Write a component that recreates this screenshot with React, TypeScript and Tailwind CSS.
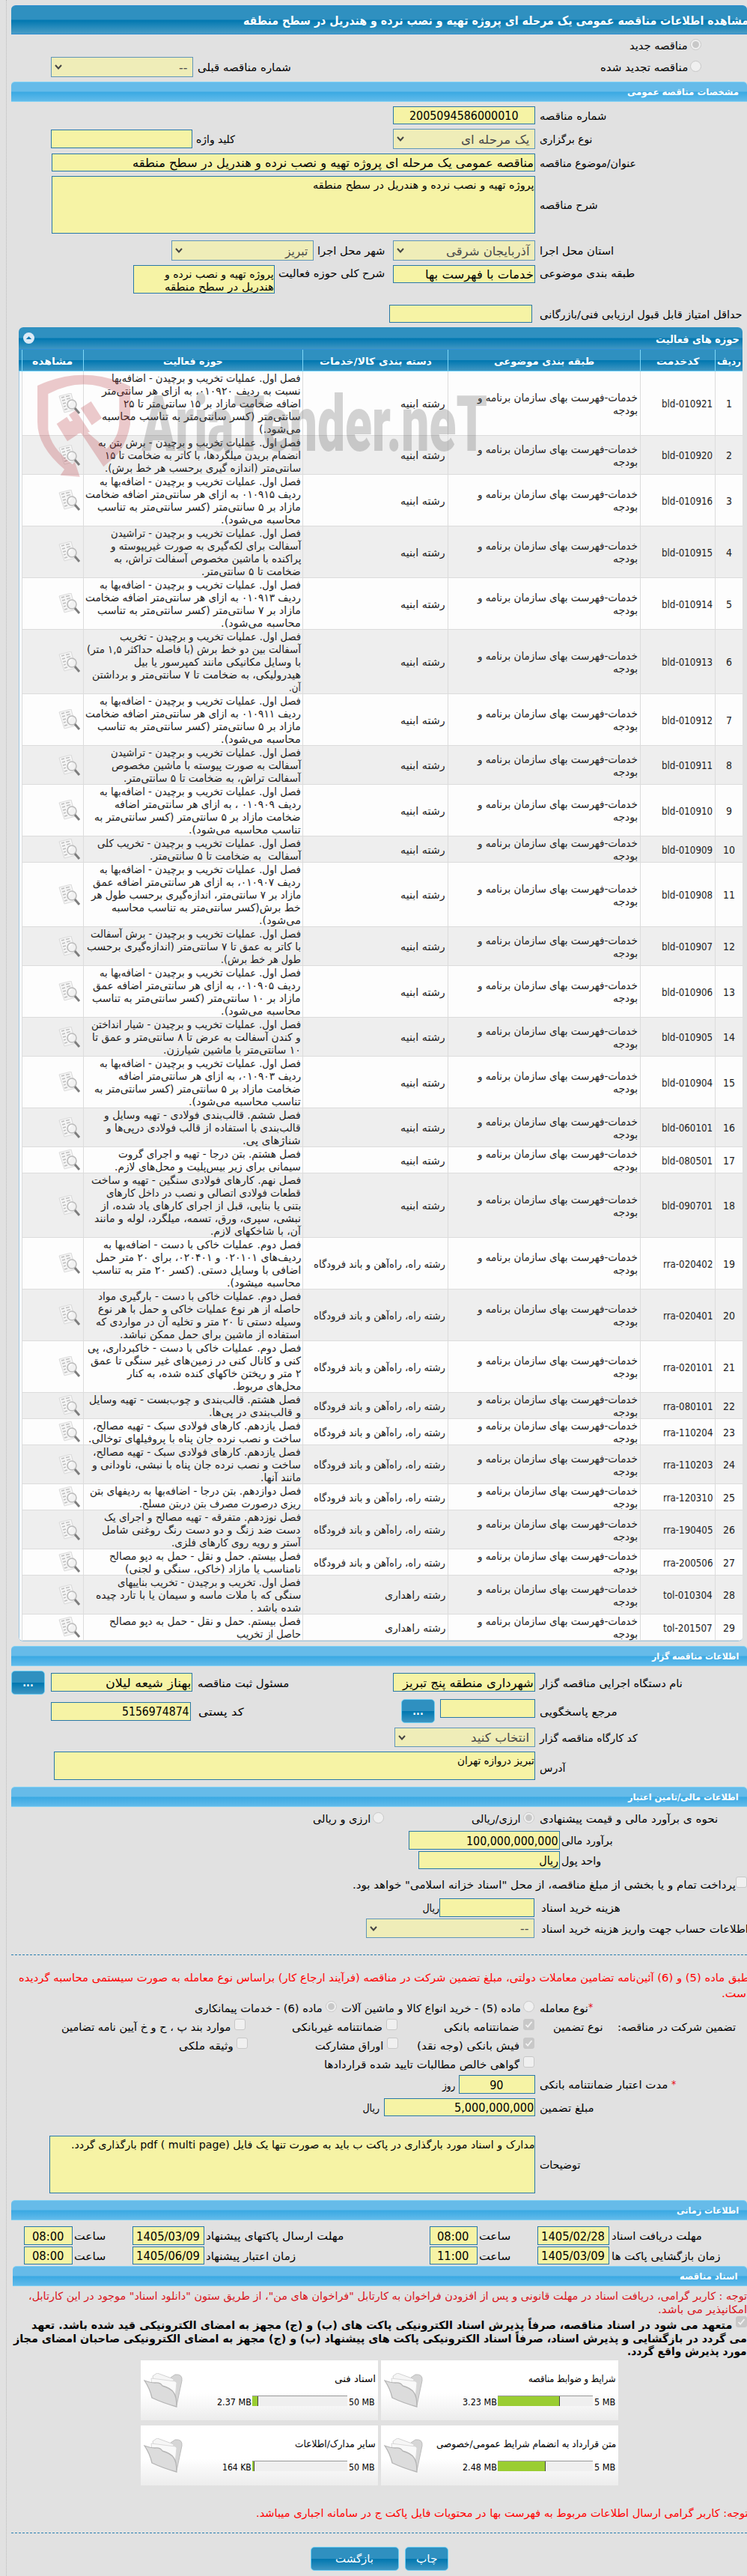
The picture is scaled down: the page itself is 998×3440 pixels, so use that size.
import { useLayoutEffect, useRef } from 'react';
import type { ReactNode } from 'react';
import clsx from 'clsx';

// Single line of text squeezed or stretched to the given width
function Fit({
  w,
  className,
  children,
}: {
  w: number;
  className?: string;
  children: ReactNode;
}) {
  const ref = useRef<HTMLSpanElement>(null);

  useLayoutEffect(() => {
    const el = ref.current;
    if (el && el.offsetWidth) {
      el.style.transform = `translateY(1px) scaleX(${w / el.offsetWidth})`;
    }
  }, [w, children]);

  return (
    <span
      className={clsx('flex shrink-0 justify-start', className)}
      style={{ width: w }}
    >
      <span ref={ref} className="shrink-0 origin-right whitespace-pre">
        {children}
      </span>
    </span>
  );
}

// Label column on the right, text ends next to the field
function Label({
  w,
  className,
  children,
}: {
  w: number;
  className?: string;
  children: ReactNode;
}) {
  return (
    <div className={clsx('flex w-[277px] shrink-0 justify-end', className)}>
      <Fit w={w}>{children}</Fit>
    </div>
  );
}

function Field({
  className,
  w,
  center,
  children,
}: {
  className: string;
  w?: number;
  center?: boolean;
  children?: ReactNode;
}) {
  return (
    <div
      className={clsx(
        'flex shrink-0 items-center border border-[#2878a8] bg-[#f6f3a5] pr-px text-[16px] leading-5',
        center && 'justify-center',
        className,
      )}
    >
      {w ? <Fit w={w}>{children}</Fit> : null}
    </div>
  );
}

function Area({ className, children }: { className: string; children?: ReactNode }) {
  return (
    <div
      className={clsx(
        'shrink-0 border border-[#2878a8] bg-[#f6f3a5] pt-[2px] leading-[17px]',
        className,
      )}
    >
      {children}
    </div>
  );
}

function Select({
  className,
  w,
  children,
}: {
  className: string;
  w: number;
  children: ReactNode;
}) {
  return (
    <div
      className={clsx(
        'flex shrink-0 items-center justify-between border border-[#6096b8] bg-[#efedb8] pr-[7px] pl-[4px] text-[16px] leading-5 text-[#4a4a4a]',
        className,
      )}
    >
      <Fit w={w}>{children}</Fit>
      <svg width="10" height="7" viewBox="0 0 10 7" fill="none">
        <path d="M1 1l4 4.4L9 1" stroke="#444" strokeWidth="2" />
      </svg>
    </div>
  );
}

function Radio({ checked, className }: { checked?: boolean; className?: string }) {
  return (
    <span
      className={clsx(
        'flex size-[15px] shrink-0 items-center justify-center rounded-full border border-[#c8c8c8] bg-[#f0f0f0]',
        className,
      )}
    >
      {checked && <span className="size-[9px] rounded-full bg-[#c8c8c8]" />}
    </span>
  );
}

function Check({ checked, className }: { checked?: boolean; className?: string }) {
  return (
    <span
      className={clsx(
        'flex size-[15px] shrink-0 items-center justify-center rounded-[3px] border border-[#c8c8c8]',
        checked ? 'bg-[#c8c8c8]' : 'bg-[#f0f0f0]',
        className,
      )}
    >
      {checked && (
        <svg width="11" height="11" viewBox="0 0 11 11" fill="none">
          <path d="M1.5 6l2.6 2.7L9.5 2" stroke="#f4f4f4" strokeWidth="1.8" />
        </svg>
      )}
    </span>
  );
}

function Bar({ w, className, children }: { w: number; className?: string; children: ReactNode }) {
  return (
    <div
      className={clsx(
        'ml-[15px] flex h-[27px] items-center rounded-t-[5px] border-y border-[#7fd0f4] bg-[linear-gradient(to_bottom,#66bbe9_0%,#66bbe9_48%,#3aa9e3_52%,#62bbea_100%)] pr-[11px] text-[12px] font-bold text-white',
        className,
      )}
    >
      <Fit w={w}>{children}</Fit>
    </div>
  );
}

function Button({ className, children }: { className: string; children: ReactNode }) {
  return (
    <button
      className={clsx(
        'flex h-8 shrink-0 items-center justify-center rounded-[5px] border border-[#6bcdf3] bg-[linear-gradient(to_bottom,#2f90c0_0%,#2f90c0_49%,#0077b0_51%,#3f96c2_100%)] text-white',
        className,
      )}
    >
      {children}
    </button>
  );
}

function Star({ className }: { className?: string }) {
  return <span className={clsx('shrink-0 text-[14px] text-red-600', className)}>*</span>;
}

// Sheet of paper with a magnifier
function ViewIcon() {
  return (
    <svg width="30" height="28" viewBox="0 0 30 28" fill="none">
      <path d="M1 4L17 0l6 22-15 4z" fill="#f5f5f5" stroke="#d3d3d3" strokeWidth=".8" />
      <path
        d="M4 6l4-1M10 4.500l5-1.200M5 10l4-1M11 8l5-1.300M6 14l4-1M7 18l3-.8M8 22l4-1"
        stroke="#bdbdbd"
        strokeWidth="1.300"
      />
      <circle cx="18" cy="15" r="6" fill="#f1f1f1" fillOpacity=".85" stroke="#bcbcbc" strokeWidth="1.600" />
      <path d="M14.500 15a4 4 0 013-4" stroke="#fff" strokeWidth="1.400" />
      <path d="M22 20l6 7" stroke="#7d7d7d" strokeWidth="3" />
    </svg>
  );
}

function FolderIcon() {
  return (
    <svg width="53" height="47" viewBox="0 0 53 47" fill="none">
      <path d="M36 6l6-4q10-1 9 8l-7 33-8-20z" fill="#d6d6d6" stroke="#bcbcbc" />
      <path d="M12 4l6-4 22 8-3 28-22-13z" fill="#f6f6f6" stroke="#d2d2d2" />
      <path d="M10 7l32 4 2 2-2 20-30-8z" fill="#f9f9f9" stroke="#dadada" />
      <path
        d="M1 10q8 3 14 3 7-1 10 4 11 3 15 9 4 5 4 19-18-5-33-12Q8 20 1 10z"
        fill="#dcdcdc"
        stroke="#b4b4b4"
        strokeWidth="1.300"
      />
    </svg>
  );
}

const BUILDING = { text: 'رشته ابنیه', w: 60 };
const ROAD = { text: 'رشته راه، راه\u200cآهن و باند فرودگاه', w: 176 };
const UPKEEP = { text: 'رشته راهداری', w: 81 };

type Row = {
  code: string;
  group: { text: string; w: number };
  lines: [string, number][];
};

const rows: Row[] = [
  {
    code: 'bld-010921',
    group: BUILDING,
    lines: [
      ['فصل اول. عملیات تخریب و برچیدن - اضافه\u200cبها', 253],
      ['نسبت به ردیف ۰۱۰۹۲۰، به ازای هر سانتی\u200cمتر', 266],
      ['اضافه ضخامت مازاد بر ۱۵ سانتی\u200cمتر تا ۲۵', 237],
      ['سانتی\u200cمتر (کسر سانتی\u200cمتر به تناسب محاسبه', 266],
      ['می\u200cشود.)', 56],
    ],
  },
  {
    code: 'bld-010920',
    group: BUILDING,
    lines: [
      ['فصل اول. عملیات تخریب و برچیدن - برش بتن به', 271],
      ['انضمام بریدن میلگردها، با کاتر به ضخامت تا ۱۵', 262],
      ['سانتی\u200cمتر (اندازه گیری برحسب هر خط برش).', 262],
    ],
  },
  {
    code: 'bld-010916',
    group: BUILDING,
    lines: [
      ['فصل اول. عملیات تخریب و برچیدن - اضافه\u200cبها به', 269],
      ['ردیف ۰۱۰۹۱۵ به ازای هر سانتی\u200cمتر اضافه ضخامت', 288],
      ['مازاد بر ۵ سانتی\u200cمتر (کسر سانتی\u200cمتر به تناسب', 272],
      ['محاسبه می\u200cشود).', 107],
    ],
  },
  {
    code: 'bld-010915',
    group: BUILDING,
    lines: [
      ['فصل اول. عملیات تخریب و برچیدن - تراشیدن', 254],
      ['آسفالت برای لکه\u200cگیری به صورت غیرپیوسته و', 254],
      ['پراکنده با ماشین مخصوص آسفالت تراش، به', 251],
      ['ضخامت تا ۵ سانتی\u200cمتر.', 133],
    ],
  },
  {
    code: 'bld-010914',
    group: BUILDING,
    lines: [
      ['فصل اول. عملیات تخریب و برچیدن - اضافه\u200cبها به', 269],
      ['ردیف ۰۱۰۹۱۳ به ازای هر سانتی\u200cمتر اضافه ضخامت', 288],
      ['مازاد بر ۷ سانتی\u200cمتر (کسر سانتی\u200cمتر به تناسب', 272],
      ['محاسبه می\u200cشود).', 107],
    ],
  },
  {
    code: 'bld-010913',
    group: BUILDING,
    lines: [
      ['فصل اول. عملیات تخریب و برچیدن - تخریب', 242],
      ['آسفالت بین دو خط برش (با فاصله حداکثر ۱,۵ متر)', 286],
      ['با وسایل مکانیکی مانند کمپرسور یا بیل', 223],
      ['هیدرولیکی، به ضخامت تا ۷ سانتی\u200cمتر و برداشتن', 279],
      ['آن.', 16],
    ],
  },
  {
    code: 'bld-010912',
    group: BUILDING,
    lines: [
      ['فصل اول. عملیات تخریب و برچیدن - اضافه\u200cبها به', 269],
      ['ردیف ۰۱۰۹۱۱ به ازای هر سانتی\u200cمتر اضافه ضخامت', 288],
      ['مازاد بر ۵ سانتی\u200cمتر (کسر سانتی\u200cمتر به تناسب', 272],
      ['محاسبه می\u200cشود).', 107],
    ],
  },
  {
    code: 'bld-010911',
    group: BUILDING,
    lines: [
      ['فصل اول. عملیات تخریب و برچیدن - تراشیدن', 254],
      ['آسفالت به صورت پیوسته با ماشین مخصوص', 253],
      ['آسفالت تراش، به ضخامت تا ۵ سانتی\u200cمتر.', 237],
    ],
  },
  {
    code: 'bld-010910',
    group: BUILDING,
    lines: [
      ['فصل اول. عملیات تخریب و برچیدن - اضافه\u200cبها به', 269],
      ['ردیف ۰۱۰۹۰۹ ، به ازای هر سانتی\u200cمتر اضافه', 249],
      ['ضخامت مازاد بر ۵ سانتی\u200cمتر (کسر سانتی\u200cمتر به', 276],
      ['تناسب محاسبه می\u200cشود).', 150],
    ],
  },
  {
    code: 'bld-010909',
    group: BUILDING,
    lines: [
      ['فصل اول. عملیات تخریب و برچیدن - تخریب کلی', 272],
      ['آسفالت  به ضخامت تا ۵ سانتی\u200cمتر.', 202],
    ],
  },
  {
    code: 'bld-010908',
    group: BUILDING,
    lines: [
      ['فصل اول. عملیات تخریب و برچیدن - اضافه\u200cبها به', 269],
      ['ردیف ۰۱۰۹۰۷، به ازای هر سانتی\u200cمتر اضافه عمق', 278],
      ['مازاد بر ۷ سانتی\u200cمتر، اندازه\u200cگیری برحسب طول هر', 280],
      ['خط برش(کسر سانتی\u200cمتر به تناسب محاسبه', 253],
      ['می\u200cشود).', 56],
    ],
  },
  {
    code: 'bld-010907',
    group: BUILDING,
    lines: [
      ['فصل اول. عملیات تخریب و برچیدن - برش آسفالت', 281],
      ['با کاتر به عمق تا ۷ سانتی\u200cمتر (اندازه\u200cگیری برحسب', 286],
      ['طول هر خط برش).', 107],
    ],
  },
  {
    code: 'bld-010906',
    group: BUILDING,
    lines: [
      ['فصل اول. عملیات تخریب و برچیدن - اضافه\u200cبها به', 269],
      ['ردیف ۰۱۰۹۰۵، به ازای هر سانتی\u200cمتر اضافه عمق', 278],
      ['مازاد بر ۱۰ سانتی\u200cمتر (کسر سانتی\u200cمتر به تناسب', 279],
      ['محاسبه می\u200cشود).', 107],
    ],
  },
  {
    code: 'bld-010905',
    group: BUILDING,
    lines: [
      ['فصل اول. عملیات تخریب و برچیدن - شیار انداختن', 280],
      ['و کندن آسفالت به عرض تا ۸ سانتی\u200cمتر و عمق تا', 279],
      ['۱۰ سانتی\u200cمتر با ماشین شیارزن.', 184],
    ],
  },
  {
    code: 'bld-010904',
    group: BUILDING,
    lines: [
      ['فصل اول. عملیات تخریب و برچیدن - اضافه\u200cبها به', 269],
      ['ردیف ۰۱۰۹۰۳، به ازای هر سانتی\u200cمتر اضافه', 244],
      ['ضخامت مازاد بر ۵ سانتی\u200cمتر (کسر سانتی\u200cمتر به', 276],
      ['تناسب محاسبه می\u200cشود).', 150],
    ],
  },
  {
    code: 'bld-060101',
    group: BUILDING,
    lines: [
      ['فصل ششم. قالب\u200cبندی فولادی - تهیه وسایل و', 263],
      ['قالب\u200cبندی با استفاده از قالب فولادی درپی\u200cها و', 260],
      ['شناژهای پی.', 78],
    ],
  },
  {
    code: 'bld-080501',
    group: BUILDING,
    lines: [
      ['فصل هشتم. بتن درجا - تهیه و اجرای گروت', 244],
      ['سیمانی برای زیر بیس\u200cپلیت و محل\u200cهای لازم.', 249],
    ],
  },
  {
    code: 'bld-090701',
    group: BUILDING,
    lines: [
      ['فصل نهم. کارهای فولادی سنگین - تهیه و ساخت', 280],
      ['قطعات فولادی اتصالی و نصب در داخل کارهای', 260],
      ['بتنی یا بنایی، قبل از اجرای کارهای یاد شده، از', 267],
      ['نبشی، سپری، ورق، تسمه، میلگرد، لوله و مانند', 276],
      ['آن، با شاخکهای لازم.', 121],
    ],
  },
  {
    code: 'rra-020402',
    group: ROAD,
    lines: [
      ['فصل دوم. عملیات خاکی با دست - اضافه\u200cبها به', 264],
      ['ردیف\u200cهای ۰۲۰۱۰۱ و ۰۲۰۴۰۱، برای ۲۰ متر حمل', 274],
      ['اضافی با وسایل دستی. (کسر ۲۰ متر به تناسب', 279],
      ['محاسبه میشود).', 99],
    ],
  },
  {
    code: 'rra-020401',
    group: ROAD,
    lines: [
      ['فصل دوم. عملیات خاکی با دست - بارگیری مواد', 271],
      ['حاصله از هر نوع عملیات خاکی و حمل با هر نوع', 271],
      ['وسیله دستی تا ۲۰ متر و تخلیه آن در مواردی که', 274],
      ['استفاده از ماشین برای حمل ممکن نباشد.', 242],
    ],
  },
  {
    code: 'rra-020101',
    group: ROAD,
    lines: [
      ['فصل دوم. عملیات خاکی با دست - خاکبرداری، پی', 285],
      ['کنی و کانال کنی در زمین\u200cهای غیر سنگی تا عمق', 281],
      ['۲ متر و ریختن خاکهای کنده شده، به کنار', 232],
      ['محل\u200cهای مربوط.', 91],
    ],
  },
  {
    code: 'rra-080101',
    group: ROAD,
    lines: [
      ['فصل هشتم. قالب\u200cبندی و چوب\u200cبست - تهیه وسایل', 283],
      ['و قالب\u200cبندی در پی\u200cها.', 123],
    ],
  },
  {
    code: 'rra-110204',
    group: ROAD,
    lines: [
      ['فصل یازدهم. کارهای فولادی سبک - تهیه مصالح،', 278],
      ['ساخت و نصب نرده جان پناه با پروفیلهای توخالی.', 284],
    ],
  },
  {
    code: 'rra-110203',
    group: ROAD,
    lines: [
      ['فصل یازدهم. کارهای فولادی سبک - تهیه مصالح،', 278],
      ['ساخت و نصب نرده جان پناه با نبشی، ناودانی و', 279],
      ['مانند آنها.', 54],
    ],
  },
  {
    code: 'rra-120310',
    group: ROAD,
    lines: [
      ['فصل دوازدهم. بتن درجا - اضافه\u200cبها به ردیفهای بتن', 282],
      ['ریزی درصورت مصرف بتن دربتن مسلح.', 216],
    ],
  },
  {
    code: 'rra-190405',
    group: ROAD,
    lines: [
      ['فصل نوزدهم. متفرقه - تهیه مصالح و اجرای یک', 263],
      ['دست ضد زنگ و دو دست رنگ روغنی شامل', 266],
      ['آستر و رویه روی کارهای فلزی.', 173],
    ],
  },
  {
    code: 'rra-200506',
    group: ROAD,
    lines: [
      ['فصل بیستم. حمل و نقل - حمل به دپو مصالح', 256],
      ['نامناسب یا مازاد (خاکی، سنگی و لجنی)', 235],
    ],
  },
  {
    code: 'tol-010304',
    group: UPKEEP,
    lines: [
      ['فصل اول. تخریب و برچیدن - تخریب بناییهای', 245],
      ['سنگی که با ملات ماسه و سیمان یا با تارد چیده', 274],
      ['شده باشد .', 68],
    ],
  },
  {
    code: 'tol-201507',
    group: UPKEEP,
    lines: [
      ['فصل بیستم. حمل و نقل - حمل به دپو مصالح', 256],
      ['حاصل از تخریب', 86],
    ],
  },
];

const GRID = 'grid grid-cols-[37px_100px_257px_194px_293px_82px_4px]';
const HEAD_CELL = 'flex items-center justify-center border-l border-[#7fd8f8]';
const CELL = 'flex items-center border-l border-[#dcdcdc] pr-[3px]';

const headers: [string, number][] = [
  ['ردیف', 32],
  ['کدخدمت', 57],
  ['طبقه بندی موضوعی', 134],
  ['دسته بندی کالا/خدمات', 150],
  ['حوزه فعالیت', 80],
  ['مشاهده', 54],
];

function Watermark() {
  return (
    <svg
      className="pointer-events-none absolute top-[496px] left-[45px] opacity-25"
      width="610"
      height="145"
      viewBox="135 198 1830 435"
      direction="ltr"
    >
      <g fill="#b8343c">
        <path d="M150 255Q335 168 522 257V410Q512 475 473 528L415 580 325 445 292 452 262 405 300 392 318 415 428 508Q478 460 478 400V288Q335 212 193 288V430Q200 500 290 570L300 560 320 620 242 614 258 590Q150 500 150 400Z" />
        <path d="M323 345L365 318 408 385 368 413ZM227 408L268 380 312 450 270 478ZM276 372L303 353 360 440 328 449Z" />
      </g>
      <text
        x="568"
        y="515"
        textLength="1385"
        lengthAdjust="spacingAndGlyphs"
        className="font-['Roboto','DejaVu_Sans',sans-serif] text-[310px] font-black"
        fill="#555"
      >
        AriaTender.neT
      </text>
    </svg>
  );
}

function ActivityTable() {
  return (
    <div className="mt-[6px] mr-[6px] ml-[25px] overflow-hidden rounded-[6px] border-b border-[#9cc6e0] bg-white">
      <div className="flex h-[29px] items-center justify-between bg-[linear-gradient(to_bottom,#2f90c0_0%,#2f90c0_49%,#0077b0_51%,#3f96c2_100%)] pr-1 pl-[6px] text-white">
        <Fit w={112} className="pt-[2px] font-bold">
          حوزه های فعالیت
        </Fit>
        <svg width="15" height="15" viewBox="0 0 15 15">
          <circle cx="7.500" cy="7.500" r="7.500" fill="#dceaf6" />
          <path d="M3.800 9l3.700-3.800L11.200 9z" fill="#0b78b4" />
        </svg>
      </div>
      <div
        className={clsx(
          GRID,
          'h-[30px] border-t border-t-[#2d8fd8] border-b border-b-[#6dcff6] bg-[linear-gradient(to_bottom,#2f90c0_0%,#2f90c0_49%,#0077b0_51%,#3f96c2_100%)] text-[13px] font-bold text-white',
        )}
      >
        {headers.map(([text, w]) => (
          <div key={text} className={HEAD_CELL}>
            <Fit w={w}>{text}</Fit>
          </div>
        ))}
      </div>
      {rows.map((row, i) => (
        <div
          key={row.code}
          className={clsx(GRID, 'border-l border-l-[#9cc6e0] text-[#222]')}
        >
          <div
            className={clsx(
              'col-span-6 grid grid-cols-subgrid border-b border-[#dcdcdc]',
              i % 2 ? 'bg-[#eee]' : 'bg-[#fdfdfd]',
            )}
          >
            <div className="flex items-center justify-center border-l border-[#dcdcdc]">
              <Fit w={i < 9 ? 8 : 16}>{i + 1}</Fit>
            </div>
            <div className={CELL}>
              <Fit w={row.group === BUILDING ? 68 : 66}>{row.code}</Fit>
            </div>
            <div className="flex flex-col justify-center border-l border-[#dcdcdc] pr-[3px] leading-[17px]">
              <Fit w={214}>خدمات-فهرست بهای سازمان برنامه و</Fit>
              <Fit w={33}>بودجه</Fit>
            </div>
            <div className={CELL}>
              <Fit w={row.group.w}>{row.group.text}</Fit>
            </div>
            <div className="border-l border-[#dcdcdc] pr-[2px] leading-[17px]">
              {row.lines.map(([text, w]) => (
                <Fit key={text} w={w}>
                  {text}
                </Fit>
              ))}
            </div>
            <div className="flex items-center border-l border-[#dcdcdc] pr-[3px]">
              <ViewIcon />
            </div>
          </div>
        </div>
      ))}
    </div>
  );
}

type Doc = {
  title: string;
  w: number;
  used: string;
  usedW: number;
  max: string;
  maxW: number;
  fill: number;
};

const docs: Doc[] = [
  { title: 'شرایط و ضوابط مناقصه', w: 117, used: '3.23 MB', usedW: 46, max: '5 MB', maxW: 28, fill: 83 },
  { title: 'اسناد فنی', w: 55, used: '2.37 MB', usedW: 46, max: '50 MB', maxW: 35, fill: 8 },
  { title: 'متن قرارداد به انضمام شرایط عمومی/خصوصی', w: 240, used: '2.48 MB', usedW: 46, max: '5 MB', maxW: 28, fill: 64 },
  { title: 'سایر مدارک/اطلاعات', w: 108, used: '164 KB', usedW: 39, max: '50 MB', maxW: 35, fill: 3 },
];

function DocCard({ doc }: { doc: Doc }) {
  return (
    <div className="flex h-20 w-[317px] justify-between bg-[linear-gradient(to_bottom,#fff_0%,#fff_55%,#ececec_100%)] pr-[3px] pl-1 text-[13px]">
      <div className="pt-[15px]">
        <Fit w={doc.w}>{doc.title}</Fit>
        <div className="mt-[14px] flex items-center pr-px">
          <Fit w={doc.maxW}>
            <bdi>{doc.max}</bdi>
          </Fit>
          <div
            dir="ltr"
            className="mr-[2px] h-[14px] w-[127px] border-t border-[#999] bg-[#efefef]"
          >
            <div
              className="h-full border-r border-[#444] bg-[#9acd32]"
              style={{ width: doc.fill }}
            />
          </div>
          <Fit w={doc.usedW} className="mr-px">
            <bdi>{doc.used}</bdi>
          </Fit>
        </div>
      </div>
      <div className="pt-[17px]">
        <FolderIcon />
      </div>
    </div>
  );
}

export default function App() {
  return (
    <div
      dir="rtl"
      className="relative h-[3440px] w-[998px] overflow-hidden bg-[#e1e1e1] pt-[7px] font-['DejaVu_Sans_Condensed','DejaVu_Sans',sans-serif] text-[14px] leading-[17px] text-black"
    >
      <div className="absolute top-0 left-[8px] h-full border-l border-dotted border-[#bbb]" />

      <div className="ml-[15px] flex h-[39px] items-center rounded-t-[6px] border-y border-[#2d8bd0] bg-[linear-gradient(to_bottom,#2f90c0_0%,#2f90c0_49%,#0077b0_51%,#4a9dc6_100%)] text-[16px] font-bold text-white">
        <Fit w={675} className="-mr-[2px]">
          مشاهده اطلاعات مناقصه عمومی یک مرحله ای پروژه تهیه و نصب نرده و هندریل در سطح منطقه
        </Fit>
      </div>

      <div className="mt-1 flex h-[21px] items-center pr-[61px]">
        <Radio checked className="-mt-[2px]" />
        <Fit w={78} className="mr-[3px]">
          مناقصه جدید
        </Fit>
      </div>
      <div className="mt-[5px] flex h-[27px] items-center pr-[61px]">
        <Radio className="-mt-[2px]" />
        <Fit w={117} className="mr-[3px]">
          مناقصه تجدید شده
        </Fit>
        <Fit w={125} className="mr-[413px]">
          شماره مناقصه قبلی
        </Fit>
        <Select w={11} className="mr-[6px] h-[27px] w-[190px]">
          --
        </Select>
      </div>

      <Bar w={149} className="mt-[6px]">
        مشخصات مناقصه عمومی
      </Bar>
      <div className="mt-[6px] flex h-6 items-center">
        <Label w={89}>شماره مناقصه</Label>
        <Field w={146} center className="mr-[6px] h-6 w-[190px]">
          2005094586000010
        </Field>
      </div>
      <div className="mt-[6px] flex h-[27px] items-center">
        <Label w={70}>نوع برگزاری</Label>
        <Select w={91} className="mr-[6px] h-[27px] w-[190px]">
          یک مرحله ای
        </Select>
        <Fit w={52} className="mr-[211px]">
          کلید واژه
        </Fit>
        <Field className="mr-[5px] h-[25px] w-[189px]" />
      </div>
      <div className="mt-[6px] flex h-6 items-center">
        <Label w={129}>عنوان/موضوع مناقصه</Label>
        <Field w={536} className="mr-[6px] h-6 w-[646px]">
          مناقصه عمومی یک مرحله ای پروژه تهیه و نصب نرده و هندریل در سطح منطقه
        </Field>
      </div>
      <div className="mt-[6px] flex h-[77px] items-center">
        <Label w={78}>شرح مناقصه</Label>
        <Area className="mr-[6px] h-[77px] w-[646px]">
          <Fit w={296}>پروژه تهیه و نصب نرده و هندریل در سطح منطقه</Fit>
        </Area>
      </div>
      <div className="mt-[9px] flex h-[27px] items-center">
        <Label w={99}>استان محل اجرا</Label>
        <Select w={111} className="mr-[6px] h-[27px] w-[190px]">
          آذربایجان شرقی
        </Select>
        <Fit w={90} className="mr-[11px]">
          شهر محل اجرا
        </Fit>
        <Select w={30} className="mr-[5px] h-[27px] w-[190px]">
          تبریز
        </Select>
      </div>
      <div className="mt-[6px] flex h-[38px] items-start">
        <Label w={127} className="mt-[2px]">
          طبقه بندی موضوعی
        </Label>
        <Field w={145} className="mr-[6px] h-6 w-[190px]">
          خدمات با فهرست بها
        </Field>
        <Fit w={142} className="mt-[2px] mr-[11px]">
          شرح کلی حوزه فعالیت
        </Fit>
        <Area className="mr-[5px] h-[38px] w-[189px]">
          <Fit w={146}>پروژه تهیه و نصب نرده و</Fit>
          <Fit w={146}>هندریل در سطح منطقه</Fit>
        </Area>
      </div>
      <div className="mt-[15px] flex h-6 items-center">
        <Label w={271}>حداقل امتیاز قابل قبول ارزیابی فنی/بازرگانی</Label>
        <Field className="mr-[10px] h-6 w-[191px]" />
      </div>

      <ActivityTable />

      <Bar w={116} className="mt-[6px]">
        اطلاعات مناقصه گزار
      </Bar>
      <div className="mt-[6px] flex h-8 items-center">
        <Label w={191}>نام دستگاه اجرایی مناقصه گزار</Label>
        <Field w={175} className="mr-[6px] mb-px h-[25px] w-[190px]">
          شهرداری منطقه پنج تبریز
        </Field>
        <Fit w={122} className="mr-[139px]">
          مسئول ثبت مناقصه
        </Fit>
        <Field w={114} className="mr-[7px] mb-px h-[25px] w-[189px]">
          بهناز شیعه لیلان
        </Field>
        <Button className="mr-[8px] w-[45px] font-bold">...</Button>
      </div>
      <div className="mt-[6px] flex h-8 items-center">
        <Label w={104}>مرجع پاسخگویی</Label>
        <Field className="mr-[6px] mb-[7px] h-[25px] w-[127px]" />
        <Button className="mr-[7px] w-[45px] font-bold">...</Button>
        <Fit w={61} className="mr-[210px]">
          کد پستی
        </Fit>
        <Field w={90} className="mr-[10px] h-[25px] w-[187px]">
          5156974874
        </Field>
      </div>
      <div className="mt-[6px] flex h-[26px] items-center">
        <Label w={131}>کد کارگاه مناقصه گزار</Label>
        <Select w={78} className="mr-[6px] h-[26px] w-[188px]">
          انتخاب کنید
        </Select>
      </div>
      <div className="mt-[6px] flex h-[38px] items-center">
        <Label w={35} className="mt-[4px]">
          آدرس
        </Label>
        <Area className="mr-[6px] h-[38px] w-[643px]">
          <Fit w={103}>تبریز دروازه تهران</Fit>
        </Area>
      </div>

      <Bar w={148} className="mt-[9px]">
        اطلاعات مالی/تامین اعتبار
      </Bar>
      <div className="mt-[7px] flex h-6 items-start">
        <Label w={238}>نحوه ی برآورد مالی و قیمت پیشنهادی</Label>
        <Radio checked className="mr-[7px]" />
        <Fit w={66} className="mr-[3px]">
          ارزی/ریالی
        </Fit>
        <Radio className="mr-[117px]" />
        <Fit w={77} className="mr-[3px]">
          ارزی و ریالی
        </Fit>
      </div>
      <div className="mt-px flex h-[25px] items-center pr-[179px]">
        <Fit w={69}>برآورد مالی</Fit>
        <Field w={123} className="mr-[2px] h-[25px] w-[202px]">
          100,000,000,000
        </Field>
      </div>
      <div className="mt-[2px] flex h-6 items-center pr-[195px]">
        <Fit w={53}>واحد پول</Fit>
        <Field w={26} className="mr-[2px] h-6 w-[189px]">
          ریال
        </Field>
      </div>
      <div className="mt-[10px] flex h-4 items-start">
        <Check />
        <Fit w={512} className="mt-[2px]">
          پرداخت تمام و یا بخشی از مبلغ مناقصه، از محل "اسناد خزانه اسلامی" خواهد بود.
        </Fit>
      </div>
      <div className="mt-[13px] flex h-[25px] items-center pr-[169px]">
        <Fit w={106}>هزینه خرید اسناد</Fit>
        <Field className="mr-[9px] h-[25px] w-[127px]" />
        <Fit w={23}>ریال</Fit>
      </div>
      <div className="mt-[2px] flex h-[26px] items-center">
        <Fit w={277} className="-mr-[2px]">
          اطلاعات حساب جهت واریز هزینه خرید اسناد
        </Fit>
        <Select w={11} className="mr-[9px] h-[26px] w-[225px]">
          --
        </Select>
      </div>

      <div className="mt-[22px] ml-[15px] border-t border-dashed border-[#2a7fb0]" />

      <div className="mt-[19px] leading-[21px] text-[#f00]">
        <Fit w={977} className="-mr-[3px]">
          طبق ماده (5) و (6) آئین‌نامه تضامین معاملات دولتی، مبلغ تضمین شرکت در مناقصه (فرآیند ارجاع کار) براساس نوع معامله به صورت سیستمی محاسبه گردیده
        </Fit>
        <Fit w={37} className="-mr-[3px]">
          است.
        </Fit>
      </div>
      <div className="flex h-[18px] items-start">
        <div className="flex w-[277px] justify-end">
          <Star />
          <Fit w={65} className="mt-px">
            نوع معامله
          </Fit>
        </div>
        <Radio className="mr-[7px]" />
        <Fit w={240} className="mt-px mr-[3px]">
          ماده (5) - خرید انواع کالا و ماشین آلات
        </Fit>
        <Radio checked className="mr-[6px]" />
        <Fit w={171} className="mt-px mr-[4px]">
          ماده (6) - خدمات پیمانکاری
        </Fit>
      </div>
      <div className="mt-[6px] flex h-4 items-start pr-[15px]">
        <Fit w={158} className="mt-[2px]">
          تضمین شرکت در مناقصه:
        </Fit>
        <Fit w={67} className="mt-[2px] mr-[19px]">
          نوع تضمین
        </Fit>
        <Check checked className="mr-[25px]" />
        <Fit w={101} className="mt-[2px] mr-[5px]">
          ضمانتنامه بانکی
        </Fit>
        <Check className="mr-[62px]" />
        <Fit w={121} className="mt-[2px] mr-[5px]">
          ضمانتنامه غیربانکی
        </Fit>
        <Check className="mr-[62px]" />
        <Fit w={226} className="mt-[2px] mr-[5px]">
          موارد بند پ ، ح و خ آیین نامه تضامین
        </Fit>
      </div>
      <div className="mt-[9px] flex h-4 items-start pr-[284px]">
        <Check checked />
        <Fit w={137} className="mt-[2px] mr-[5px]">
          فیش بانکی (وجه نقد)
        </Fit>
        <Check className="mr-[25px]" />
        <Fit w={91} className="mt-[2px] mr-[5px]">
          اوراق مشارکت
        </Fit>
        <Check className="mr-[90px]" />
        <Fit w={73} className="mt-[2px] mr-[4px]">
          وثیقه ملکی
        </Fit>
      </div>
      <div className="mt-[9px] flex h-4 items-start pr-[284px]">
        <Check />
        <Fit w={261} className="mt-[2px] mr-[5px]">
          گواهی خالص مطالبات تایید شده قراردادها
        </Fit>
      </div>
      <div className="mt-[9px] flex h-[25px] items-center">
        <div className="flex w-[277px] justify-end">
          <Star className="ml-[5px]" />
          <Fit w={171}>مدت اعتبار ضمانتنامه بانکی</Fit>
        </div>
        <Field w={18} center className="mr-[6px] h-[25px] w-[102px]">
          90
        </Field>
        <Fit w={17} className="mt-[2px] mr-[5px]">
          روز
        </Fit>
      </div>
      <div className="mt-[6px] flex h-6 items-center">
        <Label w={73}>مبلغ تضمین</Label>
        <Field w={106} className="mr-[6px] h-6 w-[202px]">
          5,000,000,000
        </Field>
        <Fit w={23} className="mr-[6px]">
          ریال
        </Fit>
      </div>
      <div className="mt-[26px] flex h-[77px] items-center">
        <Label w={54}>توضیحات</Label>
        <Area className="mr-[6px] h-[77px] w-[649px]">
          <Fit w={619}>
            مدارک و اسناد مورد بارگذاری در پاکت ب باید به صورت تنها یک فایل (pdf ( multi page بارگذاری گردد.
          </Fit>
        </Area>
      </div>

      <Bar w={83} className="mt-[9px]">
        اطلاعات زمانی
      </Bar>
      <div className="mt-2 flex h-[25px] items-center pr-[60px]">
        <Fit w={121}>مهلت دریافت اسناد</Fit>
        <Field w={85} center className="mr-[3px] h-[25px] w-[96px]">
          1405/02/28
        </Field>
        <Fit w={42} className="mr-[36px]">
          ساعت
        </Fit>
        <Field w={42} center className="mr-[2px] h-[25px] w-[64px]">
          08:00
        </Field>
        <Fit w={184} className="mr-[115px]">
          مهلت ارسال پاکتهای پیشنهاد
        </Fit>
        <Field w={85} center className="mr-[2px] h-[25px] w-[96px]">
          1405/03/09
        </Field>
        <Fit w={42} className="mr-[36px]">
          ساعت
        </Fit>
        <Field w={42} center className="mr-[2px] h-[25px] w-[65px]">
          08:00
        </Field>
      </div>
      <div className="mt-[2px] flex h-6 items-center pr-[35px]">
        <Fit w={146}>زمان بازگشایی پاکت ها</Fit>
        <Field w={85} center className="mr-[3px] h-6 w-[96px]">
          1405/03/09
        </Field>
        <Fit w={42} className="mr-[36px]">
          ساعت
        </Fit>
        <Field w={42} center className="mr-[2px] h-6 w-[64px]">
          11:00
        </Field>
        <Fit w={120} className="mr-[179px]">
          زمان اعتبار پیشنهاد
        </Fit>
        <Field w={85} center className="mr-[2px] h-6 w-[96px]">
          1405/06/09
        </Field>
        <Fit w={42} className="mr-[36px]">
          ساعت
        </Fit>
        <Field w={42} center className="mr-[2px] h-6 w-[65px]">
          08:00
        </Field>
      </div>

      <Bar w={77} className="mt-[2px] ml-[17px] pr-[13px]">
        اسناد مناقصه
      </Bar>
      <div className="mt-[3px] leading-[18px] text-[#d9121a]">
        <Fit w={960}>
          توجه : کاربر گرامی، دریافت اسناد در مهلت قانونی و پس از افزودن فراخوان به کارتابل "فراخوان های من"، از طریق ستون "دانلود اسناد" موجود در این کارتابل،
        </Fit>
        <Fit w={119}>امکانپذیر می باشد.</Fit>
      </div>
      <div className="mt-[2px] text-[14.500px] leading-[17.600px] font-bold">
        <div className="flex">
          <Check checked className="-mt-px" />
          <Fit w={936} className="mr-[5px] pt-[2px]">
            متعهد می شود در اسناد مناقصه، صرفاً پذیرش اسناد الکترونیکی پاکت های (ب) و (ج) مجهز به امضای الکترونیکی قید شده باشد. تعهد
          </Fit>
        </div>
        <Fit w={980}>
          می گردد در بازگشایی و پذیرش اسناد، صرفاً اسناد الکترونیکی پاکت های پیشنهاد (ب) و (ج) مجهز به امضای الکترونیکی صاحبان امضای مجاز
        </Fit>
        <Fit w={160}>مورد پذیرش واقع گردد.</Fit>
      </div>

      <div className="mt-[3px] flex w-[811px] flex-wrap gap-x-1 gap-y-[7px] pr-[172px]">
        {docs.map((doc) => (
          <DocCard key={doc.title} doc={doc} />
        ))}
      </div>

      <div className="mt-[27px] leading-[18px] text-[#f00]">
        <Fit w={658} className="-mr-[2px]">
          توجه: کاربر گرامی ارسال اطلاعات مربوط به فهرست بها در محتویات فایل پاکت ج در سامانه اجباری میباشد.
        </Fit>
      </div>
      <div className="mt-[18px] ml-[15px] border-t border-dashed border-[#2a7fb0]" />
      <div className="mt-[18px] flex gap-[8px] pr-[399px]">
        <Button className="w-[58px]">
          <Fit w={28}>چاپ</Fit>
        </Button>
        <Button className="w-[118px]">
          <Fit w={51}>بازگشت</Fit>
        </Button>
      </div>

      <Watermark />
    </div>
  );
}
